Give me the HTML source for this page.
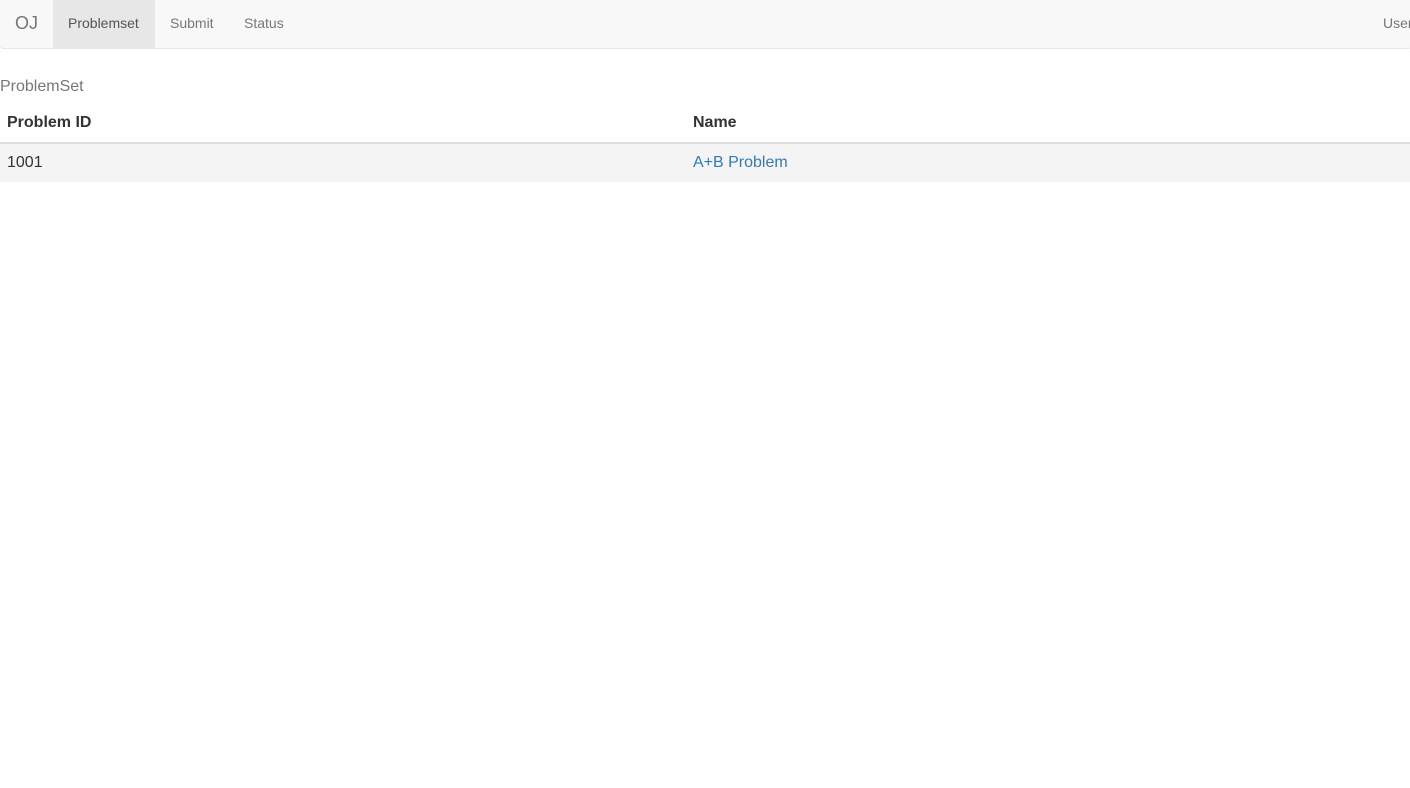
<!DOCTYPE html>
<html><head><style>
body{margin:0;font-family:"Liberation Sans",sans-serif;font-size:14px;color:#333;background:#fff;width:1410px;height:788px;overflow:hidden}
.nav{position:absolute;left:0;top:0;width:1412px;height:49px;background:#f8f8f8;border-bottom:1px solid #e7e7e7;border-radius:0 0 4px 4px;box-sizing:border-box;box-shadow:-1px 0 0 #eee}
.nav a{position:absolute;top:0;height:48px;line-height:46px;color:#777;text-decoration:none}
.brand{left:15px;font-size:18px}
.act{left:53px;width:102px;background:#e7e7e7;color:#555!important;text-align:left;text-indent:15px}
.cap{position:absolute;left:0;top:78px;color:#777;font-size:16px}
table{position:absolute;left:0;top:104px;width:1410px;border-collapse:collapse;font-size:16px}
th{text-align:left;padding:0 7px;height:38px;border-bottom:2px solid #ddd}
td{padding:0 7px;height:38px}
tr.s td{background:#f4f4f4}
td a{color:#337ab7;text-decoration:none}
</style></head><body>
<div class="nav">
<a class="brand">OJ</a>
<a class="act">Problemset</a>
<a style="left:170px">Submit</a>
<a style="left:244px">Status</a>
<a style="left:1383px">User</a>
</div>
<div class="cap">ProblemSet</div>
<table>
<tr><th style="width:672px">Problem ID</th><th>Name</th></tr>
<tr class="s"><td>1001</td><td><a>A+B Problem</a></td></tr>
</table>
</body></html>
